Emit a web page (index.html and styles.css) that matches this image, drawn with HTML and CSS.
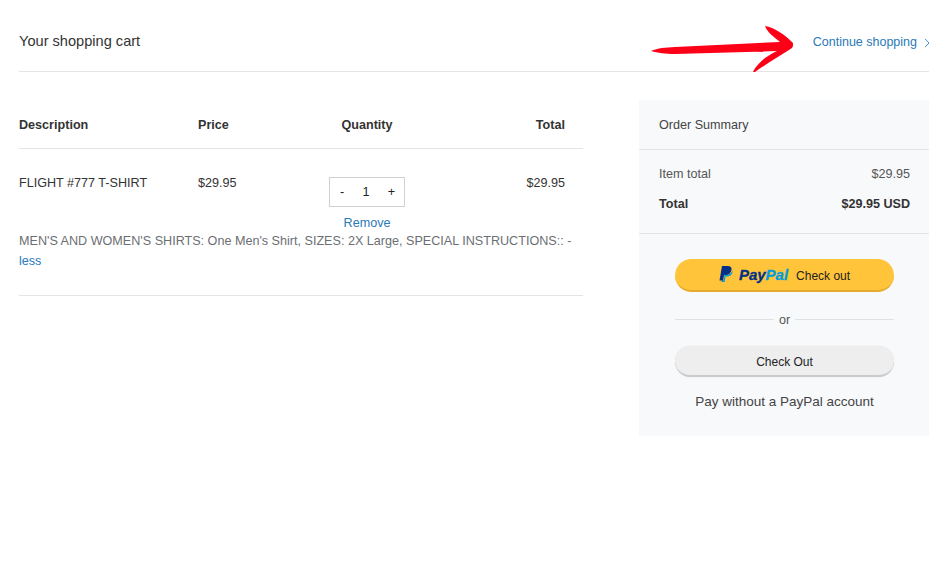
FILE: index.html
```html
<!DOCTYPE html>
<html lang="en">
<head>
<meta charset="utf-8">
<title>Your shopping cart</title>
<link rel="stylesheet" href="styles.css">
</head>
<body>
<div class="page">
  <header class="top">
    <h1 class="title">Your shopping cart</h1>
    <a class="continue">Continue shopping
      <svg class="chev" width="6" height="10" viewBox="0 0 6 10"><path d="M1 .8 5 5 1 9.2" fill="none" stroke="#4a90c4" stroke-width="1"/></svg>
    </a>
  </header>
  <svg class="arrow" width="150" height="50" viewBox="0 0 150 50">
    <path fill="#fd0018" d="M1 26C8 23 15 22.500 25 22L130 17C124 12 117 7 115 1C124 2 135 10 143 18C143 20 143 22 142 23C130 31 116 39 105 47L103 47C105 42 112 33 127 26L25 29C15 29 8 28 1 26Z"/>
  </svg>
  <main class="content">
    <section class="cart">
      <div class="row head">
        <div class="c-desc">Description</div>
        <div class="c-price">Price</div>
        <div class="c-qty">Quantity</div>
        <div class="c-total">Total</div>
      </div>
      <div class="item">
        <div class="row line">
          <div class="c-desc">FLIGHT #777 T-SHIRT</div>
          <div class="c-price">$29.95</div>
          <div class="c-qty">
            <div class="stepper"><span>-</span><span>1</span><span>+</span></div>
            <a class="remove">Remove</a>
          </div>
          <div class="c-total">$29.95</div>
        </div>
        <p class="opts">MEN'S AND WOMEN'S SHIRTS: One Men's Shirt, SIZES: 2X Large, SPECIAL INSTRUCTIONS:: - <a class="less">less</a></p>
      </div>
    </section>
    <aside class="summary">
      <div class="s-head">Order Summary</div>
      <div class="s-totals">
        <div class="s-row"><span>Item total</span><span>$29.95</span></div>
        <div class="s-row strong"><span>Total</span><span>$29.95 USD</span></div>
      </div>
      <div class="s-pay">
        <button class="btn pp">
          <svg class="pp-mark" width="14" height="17" viewBox="0 0 14 17">
            <path fill="#009cde" d="M13.500 4.500c.5 3.200-1.800 6-5.500 6H6.500l-.8 5.500H2.500l.3-1.500h1.800l.9-5.500h1.500c3.500 0 5.500-1.800 6.500-4.500z"/>
            <path fill="#003087" d="M3 0h5.500c3 0 4.500 1.500 4 4-.6 3-2.800 5-6 5H5l-.9 5.500H.5z"/>
          </svg>
          <span class="pp-word"><span class="pay">Pay</span><span class="pal">Pal</span></span>
          <span class="pp-label">Check out</span>
        </button>
        <div class="or"><span>or</span></div>
        <button class="btn plain">Check Out</button>
        <div class="nopp">Pay without a PayPal account</div>
      </div>
    </aside>
  </main>
</div>
</body>
</html>
```
FILE: styles.css
```css
* { box-sizing: border-box; }
html, body { margin: 0; padding: 0; background: #fff; }
body { width: 950px; height: 574px; overflow: hidden; font-family: "Liberation Sans", Arial, sans-serif; color: #333; font-size: 12px; }
.page { position: relative; padding: 0 21px 0 19px; }
.top { height: 72px; border-bottom: 1px solid #e2e4e6; display: flex; justify-content: space-between; align-items: flex-start; }
.title { margin: 32px 0 0; font-size: 14.600px; line-height: 18px; font-weight: 400; color: #333; }
.continue { margin: 34px 0 0; font-size: 12.500px; line-height: 16px; color: #2a7ab8; display: flex; align-items: center; gap: 7px; margin-right: -1px; }
.chev { margin-top: 1px; }
.arrow { position: absolute; left: 650px; top: 25px; }
.content { display: flex; justify-content: space-between; margin-top: 28px; font-size: 12.600px; }
.cart { width: 564px; }
.row { display: flex; }
.head { height: 49px; padding-top: 1px; align-items: center; border-bottom: 1px solid #e2e4e6; font-weight: 700; color: #333; }
.c-desc { width: 179px; }
.c-price { width: 70px; }
.c-qty { width: 198px; text-align: center; }
.c-total { width: 99px; text-align: right; }
.item { border-bottom: 1px solid #e2e4e6; height: 147px; }
.line { padding-top: 26px; line-height: 16px; }
.stepper { width: 76px; height: 30px; margin: 2px auto 0; border: 1px solid #ccd2d6; display: flex; justify-content: space-between; align-items: center; padding: 0 9px 0 10px; color: #222; }
.remove { display: block; margin-top: 7.500px; color: #2a7ab8; }
.opts { margin: .5px 0 0; line-height: 20px; color: #6b6f73; }
.less { color: #2a7ab8; }
.summary { width: 290px; height: 336px; background: #f8f9fb; }
.s-head { height: 50px; padding: 0 19px 0 20px; display: flex; align-items: center; border-bottom: 1px solid #e2e4e6; color: #444; }
.s-totals { height: 84px; padding: 16px 19px 0 20px; border-bottom: 1px solid #e2e4e6; }
.s-row { display: flex; justify-content: space-between; line-height: 16px; margin-bottom: 14px; color: #555; }
.strong { font-weight: 700; color: #333; }
.s-pay { padding: 25px 35px 0 36px; display: flex; flex-direction: column; align-items: stretch; }
.btn { border: 0; border-radius: 17px; font-family: inherit; padding: 3px 0 0; height: 33px; display: flex; align-items: center; justify-content: center; font-size: 12px; color: #222; }
.pp { background: #ffc439; border-bottom: 2px solid #e5ab2e; }
.pp-mark { margin: -3px 6px 0 0; }
.pp-word { font-weight: 700; font-style: italic; font-size: 15px; margin-top: -3px; -webkit-text-stroke: .3px; }
.pay { color: #003087; }
.pal { color: #009cde; }
.pp-label { margin-left: 8px; }
.or { margin: 20px 0 19px; height: 15px; display: flex; align-items: center; gap: 5px; color: #555; }
.or::before, .or::after { content: ""; flex: 1; height: 1px; background: #dfe1e3; }
.plain { background: #eeeeef; border-bottom: 2px solid #c9cbcd; box-shadow: 0 0 1px #d5d6d8; height: 31px; }
.nopp { text-align: center; margin-top: 16px; font-size: 13.500px; line-height: 18px; color: #444; }
```
